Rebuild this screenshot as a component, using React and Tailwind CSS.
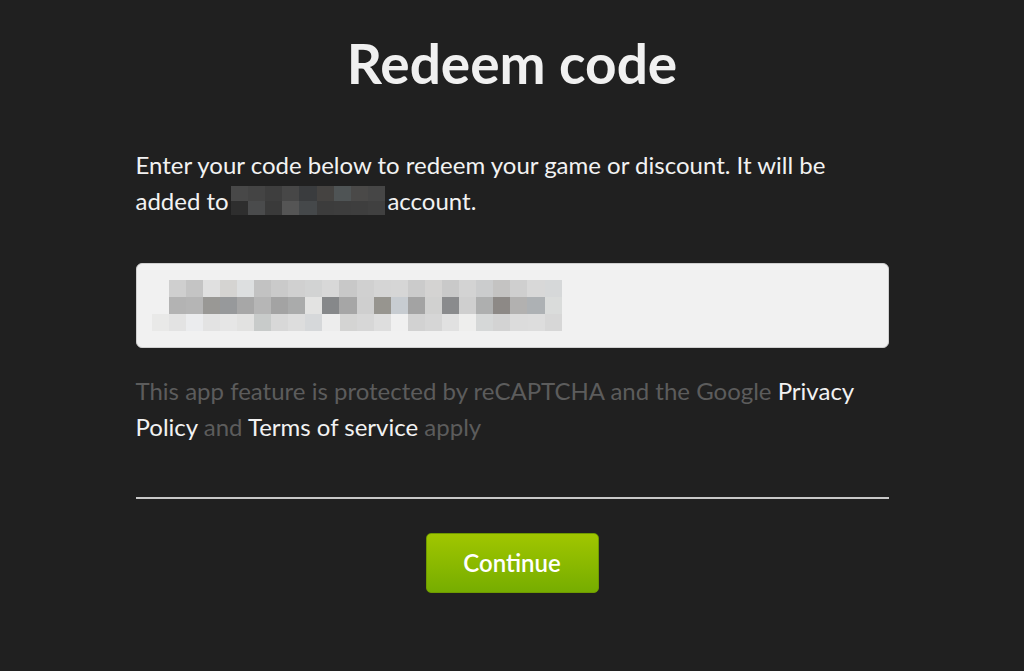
import React from "react";

const acct = [
  ["#484848", "#444444", "#3e3e3e", "#474747", "#3a3c3e", "#454341", "#4f5455", "#4a4948", "#464646"],
  ["#2e2e2e", "#4a4b4c", "#3a3a3a", "#555555", "#45484a", "#3c3c3c", "#3d3d3d", "#3e3e3e", "#404040"],
];

const code1 = ["#cfcfcf", "#c4c4c4", "#e0e0e0", "#d5d4d2", "#dddfe0", "#c2c2c2", "#cacaca", "#d0d0d0", "#d2d3d3", "#d8d8d8", "#c8c8c8", "#d0d0d0", "#d5d5d5", "#d6d6d6", "#cbcbcb", "#d4d3d2", "#c9c9c9", "#d3d3d3", "#cbcccd", "#c4c3c2", "#cfcfcf", "#d8d8d8", "#d6d8d9"];
const code2 = ["#b3b3b3", "#b5b5b5", "#999895", "#97999b", "#a7a7a7", "#b6b6b6", "#a3a3a3", "#aaabab", "#e3e3e2", "#86888a", "#a6a6a6", "#cfcfcf", "#97958f", "#c7ccd1", "#a3a3a3", "#d1d1d0", "#8a8b8d", "#cfcfcf", "#aeafaf", "#8d8986", "#b2b1b0", "#adb1b4", "#dadcdb"];
const code3 = ["#e9e9e8", "#e3e3e3", "#ebecee", "#e3e3e3", "#e6e6e6", "#e2e2e1", "#c8cbca", "#d8d8d8", "#dddddd", "#d6d8da", "#ededed", "#d4d4d3", "#d7d7d7", "#dedede", "#f0f0f0", "#d2d2d2", "#d6d6d6", "#e1e1e1", "#eeeeed", "#d6d8d8", "#d3d3d3", "#dcdcdc", "#dddddd", "#d7d7d7"];

function Row({ colors, h, w }) {
  return (
    <div className="flex">
      {colors.map((c, i) => (
        <div key={i} style={{ backgroundColor: c, width: w, height: h }} />
      ))}
    </div>
  );
}

export default function App() {
  return (
    <div
      className="min-h-[671px] w-full bg-[#202020] text-[#f2f2f2]"
      style={{ fontFamily: "Lato, 'Open Sans', sans-serif" }}
    >
      <div className="mx-auto w-[753px] pt-[28px]">
        <h1 className="text-center text-[55px] font-bold leading-[70px] text-[#f0f0f0]">
          Redeem code
        </h1>
        <p className="mt-[49px] text-[24px] leading-[36px] text-[#f2f2f2]">
          Enter your code below to redeem your game or discount. It will be
          <br />
          added to
          <span className="mx-[2px] mt-[3px] inline-block align-top">
            <Row colors={acct[0]} h={15} w={17.2} />
            <Row colors={acct[1]} h={14} w={17.2} />
          </span>
          account.
        </p>
        <div className="mt-[44px] flex h-[85px] flex-col justify-center rounded-[6px] border border-[#cfcfcf] bg-[#f1f1f1] pl-[15px]">
          <div className="flex flex-col">
            <div className="pl-[17px]">
              <Row colors={code1} h={17} w={17.1} />
            </div>
            <div className="pl-[17px]">
              <Row colors={code2} h={17} w={17.1} />
            </div>
            <Row colors={code3} h={17} w={17.1} />
          </div>
        </div>
        <p className="mt-[25px] text-[24px] leading-[36px] text-[#5c5c5c]">
          This app feature is protected by reCAPTCHA and the Google{" "}
          <span className="text-[#f2f2f2]">Privacy Policy</span> and{" "}
          <span className="text-[#f2f2f2]">Terms of service</span> apply
        </p>
        <div className="mt-[52px] h-[2px] bg-[#c9c9c9]" />
        <div className="mt-[34px] flex justify-center">
          <button className="h-[60px] w-[173px] rounded-[5px] border border-[#6f9a00] bg-gradient-to-b from-[#a0c600] to-[#76ad00] text-[24px] font-semibold text-white">
            Continue
          </button>
        </div>
      </div>
    </div>
  );
}
